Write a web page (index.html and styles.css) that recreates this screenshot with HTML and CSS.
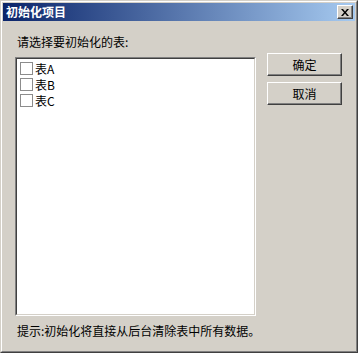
FILE: index.html
```html
<!DOCTYPE html>
<html lang="zh-CN">
<head>
<meta charset="utf-8">
<title>初始化项目</title>
<link rel="stylesheet" href="styles.css">
</head>
<body>
<div class="window">
  <div class="window-inner">
    <div class="titlebar">
      <span class="title">初始化项目</span>
      <button class="close" aria-label="关闭">
        <svg width="8" height="7" viewBox="0 0 8 7"><path d="M0 0h2l2 2.5L6 0h2L5 3.5 8 7H6L4 4.5 2 7H0l3-3.5z" fill="#000"/></svg>
      </button>
    </div>
    <div class="content">
      <div class="label">请选择要初始化的表:</div>
      <div class="main">
        <div class="listbox">
          <div class="listbox-inner">
            <div class="item"><span class="check"></span><span class="item-text">表A</span></div>
            <div class="item"><span class="check"></span><span class="item-text">表B</span></div>
            <div class="item"><span class="check"></span><span class="item-text">表C</span></div>
          </div>
        </div>
        <div class="buttons">
          <button class="btn">确定</button>
          <button class="btn">取消</button>
        </div>
      </div>
      <div class="hint">提示:初始化将直接从后台清除表中所有数据。</div>
    </div>
  </div>
</div>
</body>
</html>
```

FILE: styles.css
```css
* { box-sizing: border-box; }
html, body {
  margin: 0;
  padding: 0;
  background: #d4d0c8;
}
body {
  font-family: "Noto Sans CJK SC", "DejaVu Sans", sans-serif;
  font-size: 12px;
  color: #000;
}
.window {
  width: 358px;
  height: 353px;
  border: 1px solid;
  border-color: #d4d0c8 #404040 #404040 #d4d0c8;
  background: #d4d0c8;
}
.window-inner {
  height: 100%;
  border: 1px solid;
  border-color: #ffffff #808080 #808080 #ffffff;
  padding: 1px;
  display: flex;
  flex-direction: column;
}
.titlebar {
  height: 18px;
  background: linear-gradient(to right, #0a246a, #a6caf0);
  display: flex;
  align-items: center;
  justify-content: space-between;
  padding: 0 2px 0 3px;
}
.title {
  color: #fff;
  font-weight: bold;
  font-size: 12px;
  line-height: 14px;
  letter-spacing: 0;
}
.close {
  width: 16px;
  height: 14px;
  padding: 0;
  margin: 0;
  background: #d4d0c8;
  border: 1px solid;
  border-color: #ffffff #404040 #404040 #ffffff;
  box-shadow: inset -1px -1px 0 #808080;
  display: flex;
  align-items: center;
  justify-content: center;
}
.close svg { display: block; }
.content {
  flex: 1;
  padding: 14px 13px 0 12px;
  display: flex;
  flex-direction: column;
}
.label {
  height: 14px;
  line-height: 14px;
  padding-left: 2px;
}
.main {
  margin-top: 4px;
  display: flex;
  gap: 11px;
  align-items: flex-start;
}
.listbox {
  margin-top: 4px;
  width: 241px;
  height: 259px;
  border: 1px solid;
  border-color: #808080 #ffffff #ffffff #808080;
}
.listbox-inner {
  height: 100%;
  border: 1px solid;
  border-color: #404040 #d4d0c8 #d4d0c8 #404040;
  background: #fff;
  padding: 3px 0 0 3px;
}
.item {
  height: 16px;
  display: flex;
  align-items: flex-start;
}
.check {
  width: 13px;
  height: 13px;
  border: 1px solid #8c8c8c;
  background: #fff;
  flex: none;
}
.item-text {
  margin-left: 2px;
  line-height: 13px;
  font-size: 12px;
}
.buttons {
  display: flex;
  flex-direction: column;
  gap: 6px;
}
.btn {
  width: 75px;
  height: 23px;
  padding: 0;
  margin: 0;
  background: #d4d0c8;
  border: 1px solid;
  border-color: #ffffff #404040 #404040 #ffffff;
  box-shadow: inset -1px -1px 0 #808080;
  font-family: "Noto Sans CJK SC", "DejaVu Sans", sans-serif;
  font-size: 12px;
  line-height: 14px;
  color: #000;
}
.hint {
  margin-top: 8px;
  height: 14px;
  line-height: 14px;
  padding-left: 2px;
}
```
